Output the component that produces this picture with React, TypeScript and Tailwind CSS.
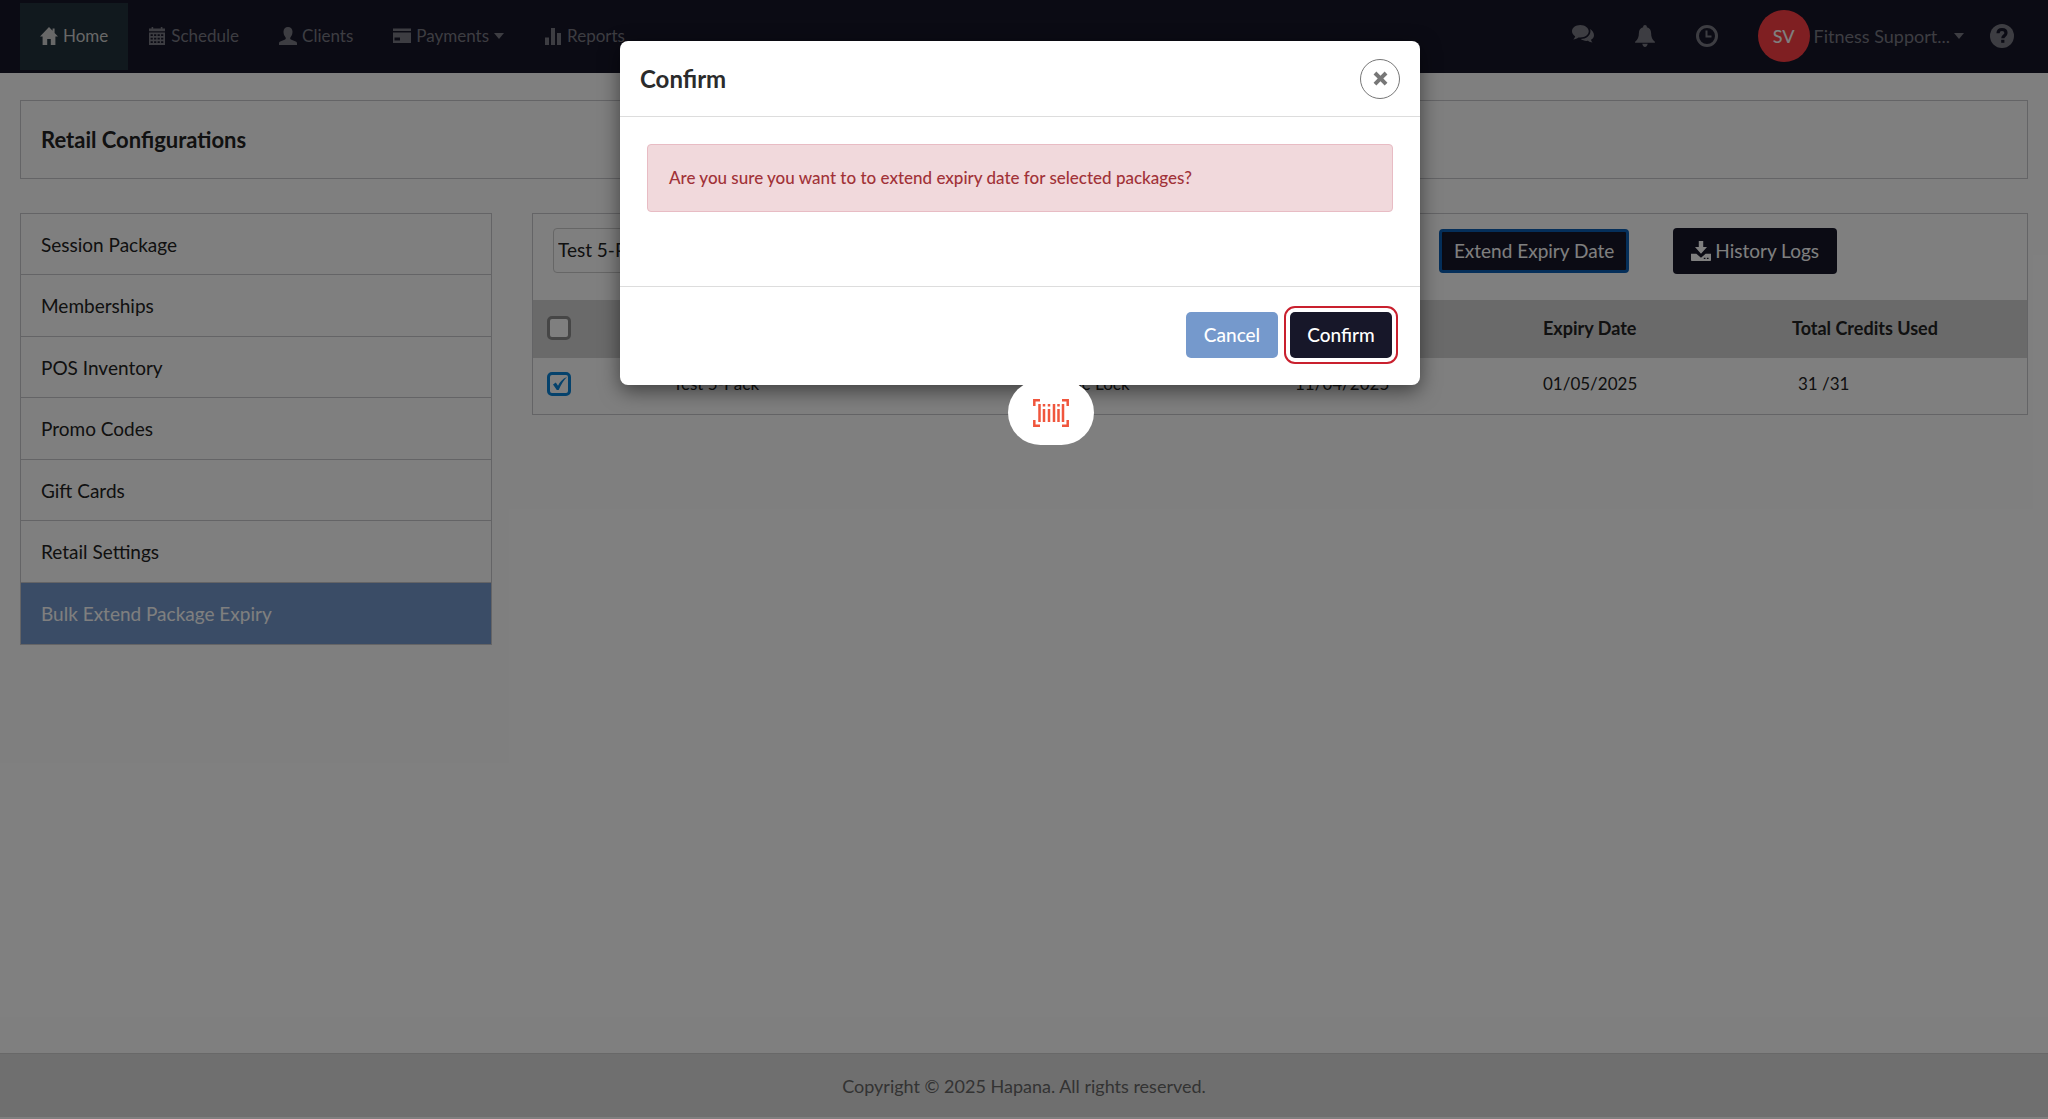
import type { ReactNode } from "react";

const navLinks = [
  { label: "Home", icon: <HomeIcon />, active: true, caret: false },
  { label: "Schedule", icon: <CalendarIcon />, active: false, caret: false },
  { label: "Clients", icon: <UserIcon />, active: false, caret: false },
  { label: "Payments", icon: <CardIcon />, active: false, caret: true },
  { label: "Reports", icon: <ChartIcon />, active: false, caret: false },
];

const sections = [
  "Session Package",
  "Memberships",
  "POS Inventory",
  "Promo Codes",
  "Gift Cards",
  "Retail Settings",
  "Bulk Extend Package Expiry",
];

const activeSection = "Bulk Extend Package Expiry";

function Icon({ size, children }: { size: number; children: ReactNode }) {
  return (
    <svg width={size} height={size} viewBox="0 0 18 18" fill="currentColor" className="shrink-0" aria-hidden="true">
      {children}
    </svg>
  );
}

function HomeIcon() {
  return (
    <Icon size={18}>
      <path d="M9 0 0 9.6h2.6V18h4.6v-6h3.6v6h4.6V9.6H18L14.6 6V1.6h-2V3.8z" />
    </Icon>
  );
}

function CalendarIcon() {
  return (
    <Icon size={18}>
      <path d="M3.6 0h1.6v1.4h7.6V0h1.600v1.4H17v2.800H1V1.400h2.600z" />
      <path
        fillRule="evenodd"
        d="M1 5.600h16V18H1zM2.600 7.200v1.800h2.200V7.200zm3.500 0v1.800h2.200V7.200zm3.500 0v1.800h2.200V7.200zm3.500 0v1.800h2.200V7.200zM2.600 10.700v1.800h2.200v-1.800zm3.500 0v1.800h2.200v-1.800zm3.500 0v1.800h2.200v-1.800zm3.500 0v1.800h2.200v-1.800zM2.600 14.200V16h2.200v-1.800zm3.500 0V16h2.200v-1.800zm3.500 0V16h2.200v-1.800zm3.500 0V16h2.200v-1.800z"
      />
    </Icon>
  );
}

function UserIcon() {
  return (
    <Icon size={18}>
      <path d="M9 0C6.300 0 4.500 1.900 4.500 4.600c0 2 .5 4.100 1.800 5.500.8.900.6 2-.2 2.400L1.300 14.600C.4 15 0 15.500 0 16.400V18h18v-1.600c0-.9-.4-1.400-1.300-1.800l-4.800-2.100c-.8-.4-1-1.500-.2-2.400 1.300-1.400 1.800-3.500 1.800-5.500C13.500 1.900 11.700 0 9 0z" />
    </Icon>
  );
}

function CardIcon() {
  return (
    <Icon size={18}>
      <path d="M0 1.500h18v2.500H0z" />
      <path fillRule="evenodd" d="M0 5.500h18V16H0zM1.500 10.500v3h5.500v-3z" />
    </Icon>
  );
}

function ChartIcon() {
  return (
    <Icon size={18}>
      <path d="M1 10.500h4V18H1zM7 1h4v17H7zM13 6h4v12h-4z" />
    </Icon>
  );
}

function CommentsIcon() {
  return (
    <Icon size={22}>
      <path d="M6.800 0C3 0 0 2.300 0 5.200c0 1.700 1 3.200 2.600 4.100-.2 1-.8 1.800-1.600 2.500 1.700-.1 3.200-.7 4.300-1.600.5.100 1 .1 1.500.1 3.800 0 6.900-2.300 6.900-5.100S10.600 0 6.800 0z" />
      <path d="M14.800 3.200c.2.600.3 1.200.3 1.900 0 3.400-3.500 6.300-8 6.400 1.200 1 2.900 1.500 4.800 1.500.4 0 .8 0 1.200-.1 1 .8 2.300 1.300 3.700 1.400-.7-.6-1.100-1.300-1.300-2.200C17 11.300 18 10 18 8.400c0-2.200-1.300-4.200-3.200-5.200z" />
    </Icon>
  );
}

function BellIcon() {
  return (
    <Icon size={22}>
      <path d="M9 0c-.9 0-1.500.6-1.500 1.500v.4C5.200 2.500 4 4.300 4 6.500c0 3.500-.9 5.200-2.900 7-.2.200-.4.500-.1 1h16c.3-.5.100-.8-.1-1-2-1.800-2.900-3.500-2.900-7 0-2.200-1.200-4-3.500-4.600v-.4C10.500.6 9.900 0 9 0zM6.800 15.300c.2 1.500 1 2.700 2.200 2.700s2-1.200 2.200-2.700z" />
    </Icon>
  );
}

function ClockIcon() {
  return (
    <svg width="22" height="22" viewBox="0 0 22 22" fill="none" stroke="currentColor" strokeWidth="3" aria-hidden="true">
      <circle cx="11" cy="11" r="9.500" />
      <path d="M10.500 5.500v6h5" strokeWidth="2" />
    </svg>
  );
}

function HelpIcon() {
  return (
    <svg width="24" height="24" viewBox="0 0 24 24" fill="currentColor" aria-hidden="true">
      <circle cx="12" cy="12" r="12" />
      <path d="M8 9.200C8.100 6.800 9.700 5.500 12 5.500s4 1.300 4 3.400c0 2.700-3.200 2.800-3.200 5.300" fill="none" stroke="#161629" strokeWidth="3.200" />
      <path d="M11.200 15.800h3.200V18.800h-3.200z" fill="#161629" />
    </svg>
  );
}

function Caret() {
  return (
    <svg width="10" height="6" viewBox="0 0 10 6" fill="currentColor" aria-hidden="true">
      <path d="M0 0h10L5 6z" />
    </svg>
  );
}

function SaveIcon() {
  return (
    <Icon size={20}>
      <path d="M7 0h4v5.500h3.400L9 11.500 3.600 5.500H7z" />
      <path fillRule="evenodd" d="M0 11.500h4.800L9 15l4.200-3.500H18V17c0 .6-.4 1-1 1H1c-.6 0-1-.4-1-1zm11.500 3.500v1.200h1.500V15zm2.800 0v1.200h1.500V15z" />
    </Icon>
  );
}

function Navbar() {
  return (
    <header className="flex h-[73px] items-center justify-between bg-[#161629] px-5 text-[#7b7b84]">
      <nav className="flex text-[17px]">
        {navLinks.map((link) => (
          <a
            key={link.label}
            href="#"
            className={`flex h-[67px] items-center gap-[5px] px-5 pb-0.5 ${link.active ? "bg-[#22323c] text-[#d0d0d0]" : ""}`}
          >
            {link.icon}
            {link.label}
            {link.caret && <Caret />}
          </a>
        ))}
      </nav>
      <div className="flex items-center gap-10 pr-3.5 pb-0.5 text-lg">
        <button type="button" aria-label="Messages">
          <CommentsIcon />
        </button>
        <button type="button" aria-label="Notifications">
          <BellIcon />
        </button>
        <button type="button" aria-label="Recent activity">
          <ClockIcon />
        </button>
        <div className="flex items-center gap-[26px]">
          <button type="button" className="flex items-center gap-1">
            <span className="flex size-[52px] items-center justify-center rounded-full bg-[#ff3e44] font-medium text-white">SV</span>
            <span>Fitness Support...</span>
            <Caret />
          </button>
          <button type="button" aria-label="Help">
            <HelpIcon />
          </button>
        </div>
      </div>
    </header>
  );
}

function Sidebar() {
  return (
    <nav className="grid min-h-[432px] w-[472px] shrink-0 auto-rows-fr border border-[#c8c8cc] text-[19px]">
      {sections.map((section) => (
        <a
          key={section}
          href="#"
          className={`flex items-center border-b border-[#c8c8cc] px-5 pt-0.5 last:border-b-0 ${
            section === activeSection ? "bg-[#7599cc] text-white" : "text-[#222222]"
          }`}
        >
          {section}
        </a>
      ))}
    </nav>
  );
}

function Checkbox({ label, checked = false }: { label: string; checked?: boolean }) {
  return (
    <span className="relative block size-6">
      <input
        type="checkbox"
        aria-label={label}
        defaultChecked={checked}
        className="peer block size-6 appearance-none rounded-[5px] border-[3px] border-[#8c8c8c] bg-white checked:border-[#0a84d8]"
      />
      <svg
        viewBox="0 0 24 24"
        className="pointer-events-none absolute inset-0 hidden text-[#0a84d8] peer-checked:block"
        fill="currentColor"
        aria-hidden="true"
      >
        <path d="M6 12.500 8.800 10.500l2.200 3.200C12.800 10 15.500 6.800 20 5c-3.200 3.300-5.800 7.300-8.300 13h-1.900z" />
      </svg>
    </span>
  );
}

function PackageTable() {
  return (
    <table className="w-full table-fixed text-left text-[#222222]">
      <colgroup>
        <col className="w-[126px]" />
        <col />
        <col className="w-[244px]" />
        <col className="w-[248px]" />
        <col className="w-[249px]" />
        <col className="w-[249px]" />
      </colgroup>
      <thead className="text-lg">
        <tr className="h-[58px] bg-[#d4d4d4]">
          <th className="pb-0.5 pl-3.5">
            <Checkbox label="Select all packages" />
          </th>
          <th aria-label="Package" />
          <th aria-label="Client" />
          <th aria-label="Start date" />
          <th className="pb-0.5 pl-3.5">Expiry Date</th>
          <th className="pb-0.5 pl-3.5">Total Credits Used</th>
        </tr>
      </thead>
      <tbody className="text-[17px]">
        <tr className="h-14">
          <td className="pb-1 pl-3.5">
            <Checkbox label="Select Test 5-Pack" checked />
          </td>
          <td className="pb-1 pl-3.5">Test 5-Pack</td>
          <td className="pb-1 pl-5">Jane Lock</td>
          <td className="pb-1 pl-3.5">11/04/2025</td>
          <td className="pb-1 pl-3.5">01/05/2025</td>
          <td className="pb-1 pl-5">31 /31</td>
        </tr>
      </tbody>
    </table>
  );
}

function PackagePanel() {
  return (
    <section className="min-w-0 flex-1 self-start border border-[#c8c8cc]">
      <div className="flex h-[86px] items-start px-5 pt-3.5 text-[19px]">
        <select aria-label="Package" className="h-[45px] w-[420px] appearance-none rounded border border-[#cccccc] bg-white px-1 text-[#222222]">
          <option>Test 5-Pack</option>
        </select>
        <div className="ml-auto flex items-center gap-11 pr-[170px] text-white">
          <button type="button" className="h-11 rounded border-[3px] border-[#0a5fb4] bg-[#161629] px-3">
            Extend Expiry Date
          </button>
          <button type="button" className="flex h-[46px] items-center gap-1 rounded bg-[#161629] px-[18px]">
            <SaveIcon />
            History Logs
          </button>
        </div>
      </div>
      <PackageTable />
    </section>
  );
}

function CloseIcon() {
  return (
    <svg width="15" height="15" viewBox="0 0 16 16" fill="currentColor" aria-hidden="true">
      <path d="M3.600.6 8 5 12.400.6l3 3L11 8l4.400 4.400-3 3L8 11l-4.400 4.400-3-3L5 8 .6 3.600z" />
    </svg>
  );
}

function ConfirmDialog() {
  return (
    <div
      role="dialog"
      aria-modal="true"
      aria-labelledby="confirm-title"
      className="w-[800px] max-w-full rounded-lg bg-white shadow-[0_6px_20px_rgba(0,0,0,0.5)]"
    >
      <div className="flex h-[76px] items-center justify-between border-b border-[#dddddd] px-5">
        <h2 id="confirm-title" className="text-2xl font-bold text-[#2b2b2b]">
          Confirm
        </h2>
        <button
          type="button"
          aria-label="Close"
          className="flex size-10 items-center justify-center rounded-full border border-[#777777] text-[#777777]"
        >
          <CloseIcon />
        </button>
      </div>
      <div className="px-[27px] pt-[27px] pb-[74px]">
        <div
          role="alert"
          className="flex h-[68px] items-center rounded border border-[#e8bcc4] bg-[#f1d9dc] px-[21px] text-[17px] font-medium text-[#a13238]"
        >
          Are you sure you want to to extend expiry date for selected packages?
        </div>
      </div>
      <div className="flex justify-end gap-3 border-t border-[#dddddd] px-7 pt-[25px] pb-[27px] text-[19px] font-medium text-white">
        <button type="button" className="h-[46px] w-[92px] rounded-[5px] bg-[#7599cc]">
          Cancel
        </button>
        <button type="button" className="h-[46px] w-[102px] rounded-[5px] bg-[#171729] outline-2 outline-offset-4 outline-[#c9202e]">
          Confirm
        </button>
      </div>
    </div>
  );
}

function ScannerIcon() {
  return (
    <svg width="36" height="28" viewBox="0 0 36 28" fill="none" stroke="#f0563d" strokeWidth="2.500" aria-hidden="true">
      <path d="M7 1.300H1.300V7M29 1.300h5.700V7M7 26.700H1.300V21M29 26.700h5.700V21" />
      <path d="M6.500 5v18M11 10v13M16 10v13M21 5v18M25.500 10v13M30 5v18M11 5v2.500M16 5v2.500M25.500 5v2.500" />
    </svg>
  );
}

export default function App() {
  return (
    <div className="relative flex min-h-screen flex-col bg-white font-['Lato',sans-serif]">
      <Navbar />
      <main className="flex-1 px-5 pt-[27px]">
        <div className="border border-[#c8c8cc] px-5 pt-6 pb-[23px]">
          <h1 className="text-[22px] leading-[30px] font-bold text-[#222222]">Retail Configurations</h1>
        </div>
        <div className="mt-[34px] flex gap-10">
          <Sidebar />
          <PackagePanel />
        </div>
      </main>
      <footer className="mb-0.5 flex h-16 items-center justify-center border-t border-[#d0d0d0] bg-[#dfdfdf] text-lg text-[#666666]">
        Copyright © 2025 Hapana. All rights reserved.
      </footer>

      <div className="absolute inset-0 flex items-start justify-center bg-black/50 pt-[41px] pr-2">
        <ConfirmDialog />
      </div>
      <div className="absolute top-[380px] left-[1008px] flex h-[65px] w-[86px] items-center justify-center rounded-full bg-white">
        <ScannerIcon />
      </div>
    </div>
  );
}
